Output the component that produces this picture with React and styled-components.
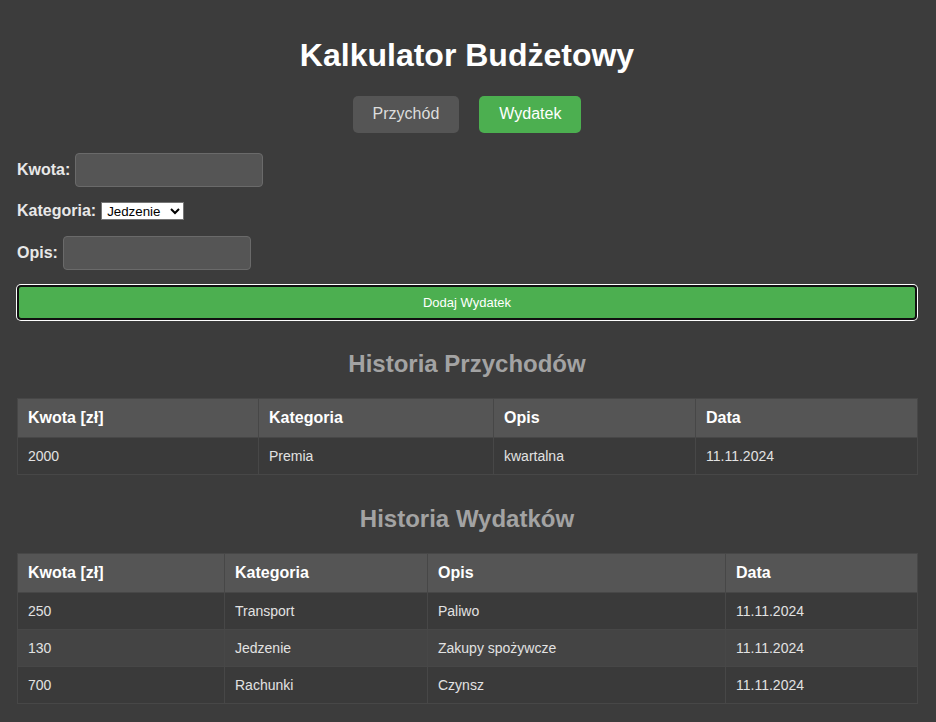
import React from "react";
import styled, { createGlobalStyle, css } from "styled-components";

const Global = createGlobalStyle`
  html, body { margin: 0; padding: 0; background: #3c3c3c; }
  body { font-family: "Liberation Sans", Arial, sans-serif; color: #e0e0e0; }
`;

const Page = styled.div`
  width: 900px;
  margin-left: 17px;
  padding-top: 21px;
  padding-bottom: 19px;
`;

const Title = styled.h1`
  margin: 16px 0 22px;
  text-align: center;
  font-size: 32px;
  line-height: 37px;
  font-weight: bold;
  color: #ffffff;
`;

const Toggle = styled.div`
  display: flex;
  justify-content: center;
  gap: 20px;
  margin-bottom: 20px;
`;

const ToggleButton = styled.button`
  font-family: "Liberation Sans", Arial, sans-serif;
  font-size: 16px;
  line-height: 18px;
  padding: 9px 20px 10px;
  border: none;
  border-radius: 5px;
  cursor: pointer;
  ${(p) =>
    p.$active
      ? css`
          background: #4caf50;
          color: #ffffff;
        `
      : css`
          background: #555555;
          color: #dddddd;
        `}
`;

const Field = styled.div`
  display: flex;
  align-items: center;
  gap: 5px;
  margin-bottom: ${(p) => p.$mb || 15}px;
`;

const Label = styled.label`
  font-weight: bold;
  font-size: 16px;
  color: #e8e8e8;
`;

const TextInput = styled.input`
  box-sizing: border-box;
  width: 188px;
  height: 34px;
  background: #555555;
  border: 1px solid #6a6a6a;
  border-radius: 4px;
  color: #fff;
  padding: 6px 8px;
  font-size: 14px;
`;

const Select = styled.select`
  box-sizing: border-box;
  height: 18px;
  width: 83px;
  font-family: "Liberation Sans", Arial, sans-serif;
  font-size: 13.33px;
  background: #fff;
  color: #000;
  border: 1px solid #767676;
  border-radius: 0;
  padding: 0 0 0 1px;
`;

const SubmitButton = styled.button`
  box-sizing: border-box;
  display: block;
  width: 100%;
  height: 35px;
  background: #4caf50;
  color: #ffffff;
  font-family: "Liberation Sans", Arial, sans-serif;
  font-size: 13px;
  border: 2px solid #111111;
  border-radius: 4px;
  box-shadow: 0 0 0 1px #ffffff;
  cursor: pointer;
`;

const SectionTitle = styled.h2`
  margin: ${(p) => p.$mt}px 0 20px;
  text-align: center;
  font-size: 24px;
  line-height: 28px;
  font-weight: bold;
  color: #a3a3a3;
`;

const Table = styled.table`
  width: 100%;
  table-layout: fixed;
  border-collapse: collapse;
  font-family: "Liberation Sans", Arial, sans-serif;
`;

const Th = styled.th`
  background: #555555;
  color: #ffffff;
  text-align: left;
  font-size: 16px;
  font-weight: bold;
  height: 39px;
  box-sizing: border-box;
  padding: 0 10px;
  border: 1px solid #474747;
`;

const Row = styled.tr`
  background: ${(p) => (p.$even ? "#444444" : "#3a3a3a")};
`;

const Td = styled.td`
  color: #e2e2e2;
  font-size: 14px;
  height: 37px;
  box-sizing: border-box;
  padding: 0 10px;
  border: 1px solid #474747;
`;

const headers = ["Kwota [zł]", "Kategoria", "Opis", "Data"];

function HistoryTable({ widths, rows }) {
  return (
    <Table>
      <colgroup>
        {widths.map((w, i) => (
          <col key={i} style={{ width: w }} />
        ))}
      </colgroup>
      <thead>
        <tr>
          {headers.map((h) => (
            <Th key={h}>{h}</Th>
          ))}
        </tr>
      </thead>
      <tbody>
        {rows.map((r, i) => (
          <Row key={i} $even={i % 2 === 1}>
            {r.map((c, j) => (
              <Td key={j}>{c}</Td>
            ))}
          </Row>
        ))}
      </tbody>
    </Table>
  );
}

export default function App() {
  return (
    <>
      <Global />
      <Page>
        <Title>Kalkulator Budżetowy</Title>
        <Toggle>
          <ToggleButton>Przychód</ToggleButton>
          <ToggleButton $active>Wydatek</ToggleButton>
        </Toggle>
        <Field>
          <Label>Kwota:</Label>
          <TextInput type="text" />
        </Field>
        <Field $mb={16}>
          <Label>Kategoria:</Label>
          <Select defaultValue="Jedzenie">
            <option>Jedzenie</option>
            <option>Transport</option>
            <option>Rachunki</option>
          </Select>
        </Field>
        <Field>
          <Label>Opis:</Label>
          <TextInput type="text" />
        </Field>
        <SubmitButton>Dodaj Wydatek</SubmitButton>
        <SectionTitle $mt={30}>Historia Przychodów</SectionTitle>
        <HistoryTable
          widths={[241, 235, 202, 222]}
          rows={[["2000", "Premia", "kwartalna", "11.11.2024"]]}
        />
        <SectionTitle $mt={30}>Historia Wydatków</SectionTitle>
        <HistoryTable
          widths={[207, 203, 298, 192]}
          rows={[
            ["250", "Transport", "Paliwo", "11.11.2024"],
            ["130", "Jedzenie", "Zakupy spożywcze", "11.11.2024"],
            ["700", "Rachunki", "Czynsz", "11.11.2024"],
          ]}
        />
      </Page>
    </>
  );
}
